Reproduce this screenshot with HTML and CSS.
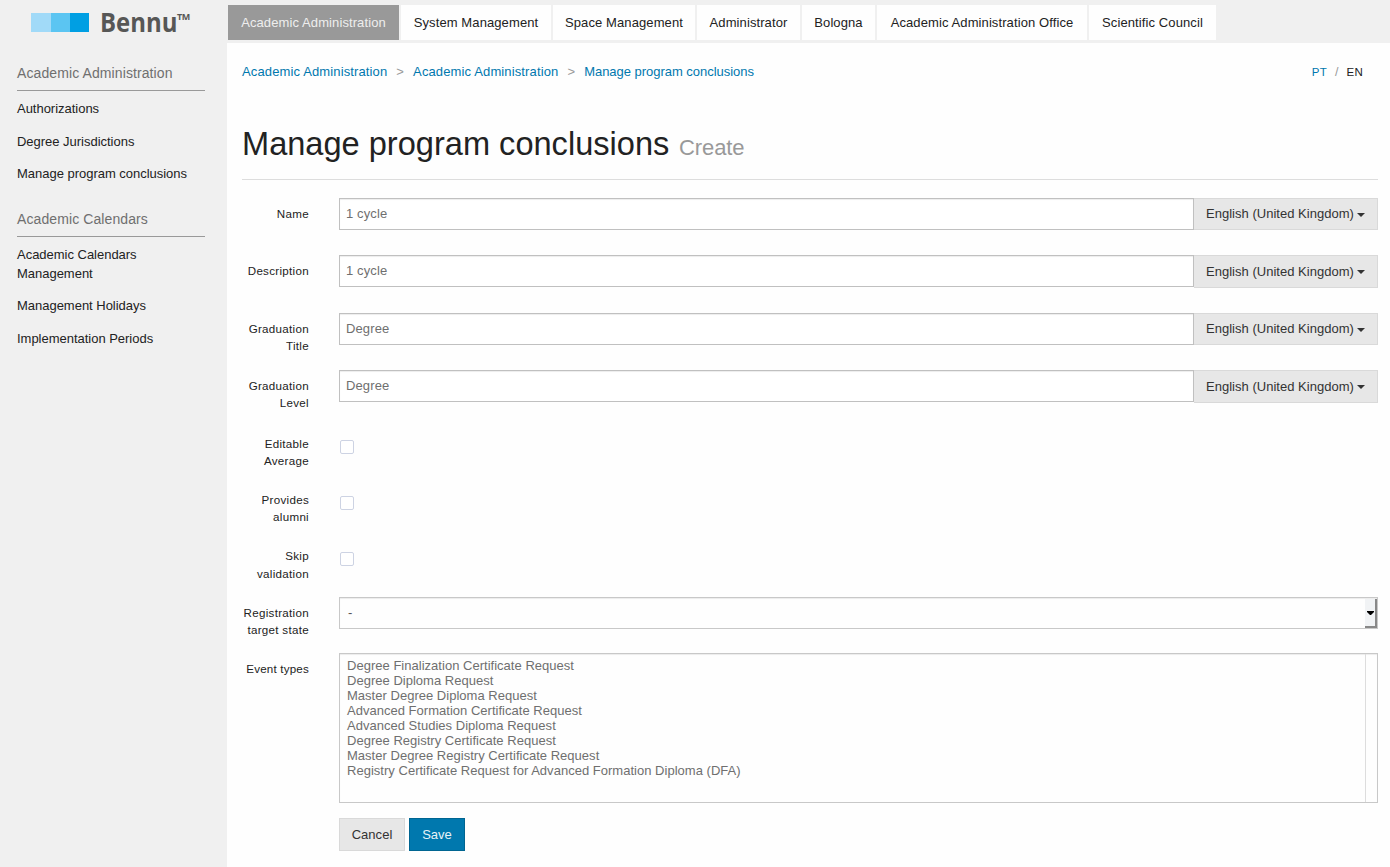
FILE: index.html
```html
<!DOCTYPE html>
<html lang="en">
<head>
<meta charset="utf-8">
<title>Manage program conclusions</title>
<link rel="stylesheet" href="styles.css">
</head>
<body>
<aside class="sidebar">
  <div class="logo">
    <svg class="logo-mark" width="58" height="19" viewBox="0 0 58 19"><path fill="#a1daf8" d="M0 0h20v19H0z"/><path fill="#5bc5f2" d="M20 0h19v19H20z"/><path fill="#009fe3" d="M39 0h19v19H39z"/></svg>
    <span class="logo-name">Bennu</span><span class="logo-tm">TM</span>
  </div>
  <nav class="side-nav">
    <h2>Academic Administration</h2>
    <ul>
      <li><a>Authorizations</a></li>
      <li><a>Degree Jurisdictions</a></li>
      <li><a>Manage program conclusions</a></li>
    </ul>
    <h2>Academic Calendars</h2>
    <ul class="calendars">
      <li><a>Academic Calendars<br>Management</a></li>
      <li><a>Management Holidays</a></li>
      <li><a>Implementation Periods</a></li>
    </ul>
  </nav>
</aside>
<div class="page">
  <nav class="tabs">
    <a class="tab active" style="width:171px">Academic Administration</a>
    <a class="tab" style="width:150px">System Management</a>
    <a class="tab" style="width:142px">Space Management</a>
    <a class="tab" style="width:103px">Administrator</a>
    <a class="tab" style="width:73px">Bologna</a>
    <a class="tab" style="width:210px">Academic Administration Office</a>
    <a class="tab" style="width:127px">Scientific Council</a>
  </nav>
  <main class="content">
    <div class="topline">
      <div class="crumbs"><a>Academic Administration</a><i>&gt;</i><a>Academic Administration</a><i>&gt;</i><a class="current">Manage program conclusions</a></div>
      <div class="langs"><a>PT</a><i>/</i><b>EN</b></div>
    </div>
    <h1><span class="title">Manage program conclusions</span><small>Create</small></h1>
    <form class="form">
      <div class="row"><label>Name</label><div class="group"><div class="input">1 cycle</div><div class="addon">English (United Kingdom)<span class="caret"></span></div></div></div>
      <div class="row"><label>Description</label><div class="group"><div class="input">1 cycle</div><div class="addon">English (United Kingdom)<span class="caret"></span></div></div></div>
      <div class="row"><label>Graduation<br>Title</label><div class="group"><div class="input">Degree</div><div class="addon">English (United Kingdom)<span class="caret"></span></div></div></div>
      <div class="row"><label>Graduation<br>Level</label><div class="group"><div class="input">Degree</div><div class="addon">English (United Kingdom)<span class="caret"></span></div></div></div>
      <div class="row check"><label>Editable<br>Average</label><span class="box"></span></div>
      <div class="row check"><label>Provides<br>alumni</label><span class="box"></span></div>
      <div class="row check"><label>Skip<br>validation</label><span class="box"></span></div>
      <div class="row pick"><label>Registration<br>target state</label><div class="select"><span>-</span><span class="arrow"><svg width="7" height="4" viewBox="0 0 7 4"><path d="M0 0h7v1L4 4H3L0 1z"/></svg></span></div></div>
      <div class="row events"><label>Event types</label>
        <div class="list"><ul>
          <li>Degree Finalization Certificate Request</li>
          <li>Degree Diploma Request</li>
          <li>Master Degree Diploma Request</li>
          <li>Advanced Formation Certificate Request</li>
          <li>Advanced Studies Diploma Request</li>
          <li>Degree Registry Certificate Request</li>
          <li>Master Degree Registry Certificate Request</li>
          <li>Registry Certificate Request for Advanced Formation Diploma (DFA)</li>
        </ul><span class="track"></span></div>
      </div>
      <div class="actions"><span class="btn cancel">Cancel</span><span class="btn save">Save</span></div>
    </form>
  </main>
</div>
</body>
</html>
```

FILE: styles.css
```css
* { box-sizing: border-box; }
body {
  margin: 0;
  display: flex;
  height: 867px;
  overflow: hidden;
  background: #fefefe;
  color: #222;
  font: 13px/19px "Liberation Sans", Arial, sans-serif;
  letter-spacing: .02px;
  white-space: nowrap;
}
ul { list-style: none; margin: 0; padding: 0; }
i { font-style: normal; color: #999; }

.sidebar { flex: 0 0 227px; background: #f0f0f0; }
.logo { display: flex; align-items: flex-start; height: 63px; padding: 13px 0 0 31px; }
.logo-name {
  margin-left: 11px;
  font: bold 26px/26px "Open Sans", sans-serif;
  color: #575756;
  letter-spacing: 0;
  margin-top: -4px;
  width: 77px;
  transform: scaleX(.92);
  transform-origin: 0 0;
}
.logo-tm { font: bold 9px/9px "Open Sans", sans-serif; color: #575756; margin-top: -1px; letter-spacing: -.4px; }
.side-nav { padding: 0 22px 0 17px; }
.side-nav h2 {
  margin: 0 0 8px;
  height: 28px;
  border-bottom: 1px solid #999;
  font-size: 14px;
  line-height: 20px;
  font-weight: normal;
  color: #6f6f6f;
  letter-spacing: .1px;
}
.side-nav ul { display: flex; flex-direction: column; gap: 13.6px; margin-bottom: 26px; letter-spacing: -.02px; }
.side-nav .calendars { gap: 13.4px; margin-top: -.2px; }

.page { flex: 1; }
.tabs { display: flex; gap: 2px; height: 43px; padding: 5px 0 3px 1px; background: #f0f0f0; letter-spacing: .1px; }
.tab { background: #fefefe; text-align: center; line-height: 35px; }
.tab.active { background: #999; color: #eee; }

.content { padding: 19px 12px 0 15px; }
.topline { display: flex; justify-content: space-between; padding-right: 15px; }
.topline a { color: #0078ae; }
.crumbs { letter-spacing: .13px; }
.crumbs .current { letter-spacing: -.03px; }
.crumbs i { margin: 0 9px; }
.langs { font-size: 11.5px; line-height: 20px; letter-spacing: .2px; }
.langs i { margin: 0 8px; font-size: 12.5px; }
.langs b { font-weight: normal; }
h1 {
  margin: 0;
  height: 98px;
  padding-top: 41px;
  border-bottom: 1px solid #ddd;
  font-size: 34px;
  line-height: 40px;
  font-weight: normal;
  letter-spacing: 0;
}
h1 .title { display: inline-block; width: 427px; transform: scaleX(.958); transform-origin: 0 0; }
h1 small { font-size: 22px; color: #999; margin-left: 10px; letter-spacing: -.1px; }

.form { padding-top: 17.6px; }
.row { display: grid; grid-template-columns: 67px 1fr; column-gap: 30px; align-items: start; height: 57.5px; }
.row label { text-align: right; font-size: 11.6px; line-height: 17.2px; padding-top: 7.2px; letter-spacing: .3px; }
.group { display: flex; }
.input {
  flex: 1;
  height: 32px;
  padding: 0 6px;
  border: 1px solid #c0c0c0;
  line-height: 30.6px;
  color: #6f6f6f;
  background: #fff;
  box-shadow: inset 0 1px 1px rgba(0,0,0,.075);
  letter-spacing: .12px;
}
.addon {
  width: 184px;
  height: 32.5px;
  border: 1px solid #d9d9d9;
  border-left: 0;
  background: #e7e7e7;
  color: #333;
  line-height: 31px;
  padding-left: 12px;
  display: flex;
  align-items: center;
}
.caret { border: 4px solid transparent; border-top-color: #333; border-bottom: 0; margin: 1.4px 0 0 3px; }
.row.check { height: 56.3px; }
.box { width: 14px; height: 14px; border: 1px solid #cdd3e3; border-radius: 2px; margin: 12px 0 0 1px; background: #fff; }
.row.pick { height: 56.1px; }
.row.events label { padding-top: 7.6px; letter-spacing: .2px; }
.select {
  display: flex;
  justify-content: space-between;
  height: 32px;
  margin-top: .6px;
  border: 1px solid #c8c8c8;
  padding-left: 8px;
  line-height: 30px;
  color: #555;
  box-shadow: inset 0 1px 1px rgba(0,0,0,.075);
}
.arrow {
  width: 12px;
  margin: 1px 0 0;
  background: #f1f3f5;
  border-right: 2px solid #888;
  border-bottom: 2px solid #888;
  display: flex;
  align-items: center;
  justify-content: center;
}
.list {
  display: flex;
  justify-content: space-between;
  height: 150px;
  border: 1px solid #c8c8c8;
  line-height: 15px;
  color: #6f6f6f;
  box-shadow: inset 0 1px 1px rgba(0,0,0,.075);
}
.list ul { padding: 4px 0 0 7px; }
.track { width: 12px; border-left: 1px solid #ddd; }
.actions { display: flex; gap: 4px; padding: 108.4px 0 0 97px; }
.btn { height: 33px; line-height: 31px; text-align: center; border: 1px solid #d9d9d9; background: #e7e7e7; color: #333; }
.cancel { width: 66px; }
.save { width: 56px; background: #0078ae; border-color: #006591; color: #e8f2f7; }
```
